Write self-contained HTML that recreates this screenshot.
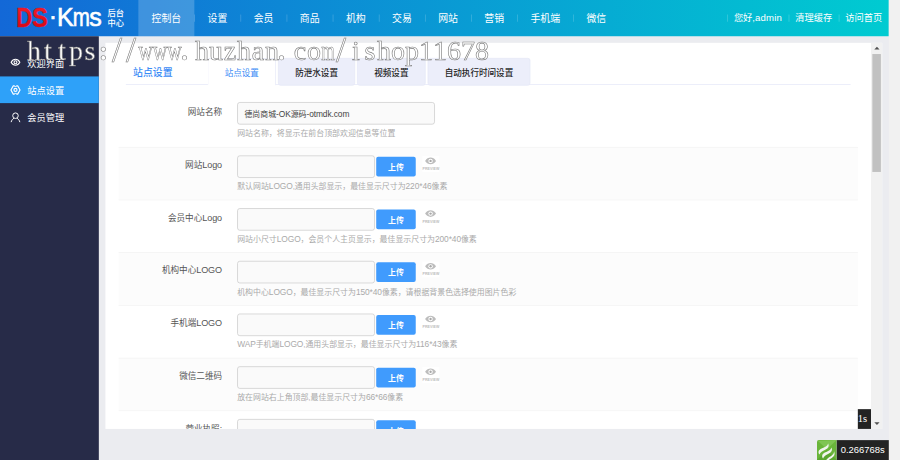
<!DOCTYPE html>
<html lang="zh-CN">
<head>
<meta charset="utf-8">
<title>DSKMS 后台中心</title>
<style>
*{box-sizing:border-box;margin:0;padding:0}
html,body{width:900px;height:460px;overflow:hidden;background:#ebecf0}
body{font-family:"Liberation Sans","Noto Sans CJK SC",sans-serif;position:relative}
#stage{position:absolute;left:0;top:0;width:1366px;height:698.2px;transform:scale(0.658858);transform-origin:0 0;background:#ebecf0;overflow:hidden;font-size:12px;color:#333}
/* outer scrollbar */
#oscroll{position:absolute;right:0;top:0;width:17px;height:699px;background:#f1f1f1}
/* header */
#hd{position:absolute;left:0;top:0;width:1349px;height:55px;background:linear-gradient(to right,#1368d7 0%,#00cbd1 100%)}
#logo{position:absolute;left:0;top:0;width:210px;height:55px}
#logo .bc{position:absolute;left:163px;top:13.200px;width:30px;font-size:12.5px;color:#fff;white-space:nowrap;font-weight:500}
#logo .bc i{display:block;font-style:normal;height:14.5px;line-height:14.5px}
#nav{position:absolute;left:210px;top:0;height:55px;display:flex}
#nav a{display:block;height:55px;line-height:55px;padding:0 20px;font-size:15px;color:#fff;position:relative;white-space:nowrap}
#nav a.on{background:rgba(255,255,255,.2)}
#nav a+a:before{content:"";position:absolute;left:0;top:22px;width:1px;height:11px;background:rgba(255,255,255,.25)}
#tools{position:absolute;right:0;top:0;height:55px;display:flex}
#tools a{display:block;height:55px;line-height:55px;padding:0 10px;font-size:14px;color:#fff;position:relative;white-space:nowrap}
#tools a:before{content:"";position:absolute;left:0;top:22px;width:1px;height:11px;background:rgba(255,255,255,.28)}
/* sidebar */
#side{position:absolute;left:0;top:55px;width:150px;height:644px;background:#272b48;padding-top:20px}
#side a{display:block;height:41px;line-height:42px;color:#fff;font-size:14px;padding-left:41.5px;position:relative;white-space:nowrap}
#side a.on{background:linear-gradient(#2ea1f9,#2ea1f9) no-repeat;background-size:100% 40.5px}
#side a svg{position:absolute;left:15px;top:12px;width:17px;height:17px}
/* iframe */
#frame{position:absolute;left:160px;top:65px;width:1179px;height:586px;background:#fff;overflow:hidden}
#iscroll{position:absolute;right:0;top:0;width:17px;height:586px;background:#f1f1f1}
#iscroll .thumb{position:absolute;left:2px;top:17px;width:13px;height:179px;background:#c1c1c1}
#iscroll .up,#iscroll .dn{position:absolute;left:5px;width:0;height:0;border-left:4px solid transparent;border-right:4px solid transparent}
#iscroll .up{top:6px;border-bottom:4px solid #505050}
#iscroll .dn{bottom:6px;border-top:4px solid #505050}
#page{position:absolute;left:0;top:0;width:1162px;height:586px;overflow:hidden}
#bar{position:absolute;left:31px;top:24px;width:1100px;height:40px;border-bottom:1px solid #e3e6f7}
#bar h3{position:absolute;left:0;top:0;width:124px;height:39px;line-height:42px;font-size:15px;font-weight:500;color:#3b8cf6;padding-left:11px}
#bar .tab{position:absolute;top:-1px;height:42px;line-height:43px;font-size:13px;text-align:center;background:#eceefa;border:1px solid #e3e6f6;color:#222;border-radius:4px;font-weight:500}
#bar .tab.on{background:#fff;color:#3b8cf6;height:42px;font-weight:normal;border-bottom-color:#fff;border-radius:4px 4px 0 0}
.row{position:absolute;left:20px;width:1122px;height:80px;border-top:1px solid #f1f1f1}
.row.g{background:#fcfcfc}
.row label{position:absolute;right:965px;top:16.5px;line-height:20px;font-size:13px;color:#555;white-space:nowrap}
.row .inp{position:absolute;left:180px;top:12px;height:34px;border:1px solid #c6c6c6;border-radius:4px;background:#fafafa;font-size:12px;line-height:36px;padding-left:10px;color:#444;overflow:hidden;white-space:nowrap}
.row .btn{position:absolute;left:391px;top:14.300px;width:60px;height:30px;line-height:32.500px;background:#409bfd;color:#fff;font-weight:bold;font-size:12px;text-align:center;border-radius:3px}
.row .eye{position:absolute;left:461px;top:13px;width:26px;height:24px;background:#fff}
.row .pv{position:absolute;left:458px;top:29px;width:32px;text-align:center;font-size:5.4px;line-height:7px;color:#bdbdbd;font-weight:bold;letter-spacing:.1px;white-space:nowrap}
.row .hint{position:absolute;left:180px;top:49px;line-height:20px;font-size:12px;color:#aaa;white-space:nowrap}
.en{font-size:106%;letter-spacing:-.15px}
#itrace{position:absolute;left:1142px;bottom:0;width:20px;height:30px;background:#232323;color:#fff;font-family:"Liberation Serif",serif;font-size:16px;line-height:30px;text-align:right;padding-right:6px;overflow:hidden;white-space:nowrap;direction:rtl}
/* outer trace */
#trace{position:absolute;right:17px;bottom:0.2px;height:30px;display:flex;align-items:flex-start}
#trace .ic{width:30px;height:30px}
#trace .tm{height:32px;line-height:30px;background:#232323;color:#fff;font-size:14.3px;padding:0 6px;width:79px;white-space:nowrap}
#wm{position:absolute;left:0;top:0;width:900px;height:460px;pointer-events:none;will-change:transform;opacity:.999}
</style>
</head>
<body>
<div id="stage">
  <div id="hd">
    <div id="logo"><svg width="210" height="55" viewBox="0 0 210 55"><defs><linearGradient id="rg" x1="0" y1="0" x2="0" y2="1"><stop offset="0" stop-color="#f4222e"/><stop offset="1" stop-color="#d4000f"/></linearGradient></defs><text font-family="Liberation Sans, sans-serif" font-weight="bold" font-size="41" fill="url(#rg)" stroke="#e2101e" stroke-width=".5" y="40.6"><tspan x="24.5" textLength="24.3" lengthAdjust="spacingAndGlyphs">D</tspan><tspan x="48.6" textLength="24" lengthAdjust="spacingAndGlyphs">S</tspan></text><text font-family="Liberation Sans, sans-serif" font-size="38" fill="#fff" stroke="#fff" stroke-width=".9" y="39.6"><tspan x="74" y="37.5">·</tspan><tspan x="86.6" y="39.6">K</tspan><tspan x="110.6" textLength="26" lengthAdjust="spacingAndGlyphs">m</tspan><tspan x="135.4">s</tspan></text></svg><span class="bc"><i>后台</i><i>中心</i></span></div>
    <div id="nav"><a class="on">控制台</a><a>设置</a><a>会员</a><a>商品</a><a>机构</a><a>交易</a><a>网站</a><a>营销</a><a>手机端</a><a>微信</a></div>
    <div id="tools"><a>您好,<span style="font-size:14.5px;letter-spacing:.35px">admin</span></a><a>清理缓存</a><a>访问首页</a></div>
  </div>
  <div id="oscroll"></div>
  <div id="side">
    <a><svg style="top:11px" viewBox="0 0 17 17" fill="none" stroke="#fff" stroke-width="1.7"><path d="M1.900 8.500C3.600 5.400 5.900 4 8.500 4S13.400 5.400 15.100 8.500C13.400 11.600 11.100 13 8.500 13S3.600 11.600 1.900 8.500Z"/><circle cx="8.5" cy="8.500" r="2.200"/></svg>欢迎界面</a>
    <a class="on"><svg style="top:11.5px" viewBox="0 0 17 17" fill="none" stroke="#fff" stroke-width="1.8"><path d="M7.300 2.200H5.200L1.600 8.500L5.200 14.800H7.300M9.700 2.200H11.800L15.400 8.500L11.800 14.800H9.700" stroke-linejoin="round"/><path d="M7.300 2.200V3.300H9.700V2.200M7.300 14.800V13.700H9.700V14.800" stroke-width="1.200"/><circle cx="8.5" cy="8.500" r="2.300"/></svg>站点设置</a>
    <a><svg style="top:12.6px" viewBox="0 0 17 17" fill="none" stroke="#fff" stroke-width="1.5"><circle cx="8.5" cy="5.600" r="4.200"/><path d="M1.900 15.400C2.600 12.300 4.400 10.400 6.300 9.400M10.700 9.400C12.600 10.400 14.400 12.300 15.100 15.400"/></svg>会员管理</a>
  </div>
  <div id="frame">
    <div id="page">
      <div id="bar">
        <h3>站点设置</h3>
        <span class="tab on" style="left:124px;width:104px">站点设置</span>
        <span class="tab" style="left:231px;width:117px">防泄水设置</span>
        <span class="tab" style="left:351px;width:104px">视频设置</span>
        <span class="tab" style="left:458px;width:156px">自动执行时间设置</span>
      </div>
      <div class="row" style="top:78px;border-top:none"><label>网站名称</label><span class="inp" style="width:300px">德尚商城<span class="en">-OK</span>源码<span class="en">-otmdk.com</span></span><span class="hint">网站名称，将显示在前台顶部欢迎信息等位置</span></div>
      <div class="row g" style="top:158px"><label>网站<span class="en">Logo</span></label><span class="inp" style="width:208.5px"></span><span class="btn">上传</span><svg class="eye" viewBox="0 0 26 24"><path d="M4.200 7.200C6.500 3.700 9.500 2.200 12.500 2.200s6 1.500 8.300 5C18.500 10.700 15.500 12.200 12.500 12.200S6.500 10.700 4.200 7.200Z" fill="#bdbdbd"/><circle cx="12.5" cy="7.200" r="3.300" fill="#fff"/><circle cx="12.5" cy="7.200" r="1.800" fill="#a8a8a8"/></svg><span class="pv">PREVIEW</span><span class="hint">默认网站<span class="en">LOGO</span>,通用头部显示，最佳显示尺寸为<span class="en">220*46</span>像素</span></div>
      <div class="row" style="top:238px"><label>会员中心<span class="en">Logo</span></label><span class="inp" style="width:208.5px"></span><span class="btn">上传</span><svg class="eye" viewBox="0 0 26 24"><path d="M4.200 7.200C6.500 3.700 9.500 2.200 12.500 2.200s6 1.500 8.300 5C18.500 10.700 15.500 12.200 12.500 12.200S6.500 10.700 4.200 7.200Z" fill="#bdbdbd"/><circle cx="12.5" cy="7.200" r="3.300" fill="#fff"/><circle cx="12.5" cy="7.200" r="1.800" fill="#a8a8a8"/></svg><span class="pv">PREVIEW</span><span class="hint">网站小尺寸<span class="en">LOGO</span>，会员个人主页显示，最佳显示尺寸为<span class="en">200*40</span>像素</span></div>
      <div class="row g" style="top:318px"><label>机构中心<span class="en">LOGO</span></label><span class="inp" style="width:208.5px"></span><span class="btn">上传</span><svg class="eye" viewBox="0 0 26 24"><path d="M4.200 7.200C6.500 3.700 9.500 2.200 12.500 2.200s6 1.500 8.300 5C18.500 10.700 15.500 12.200 12.500 12.200S6.500 10.700 4.200 7.200Z" fill="#bdbdbd"/><circle cx="12.5" cy="7.200" r="3.300" fill="#fff"/><circle cx="12.5" cy="7.200" r="1.800" fill="#a8a8a8"/></svg><span class="pv">PREVIEW</span><span class="hint">机构中心<span class="en">LOGO</span>，最佳显示尺寸为<span class="en">150*40</span>像素，请根据背景色选择使用图片色彩</span></div>
      <div class="row" style="top:398px"><label>手机端<span class="en">LOGO</span></label><span class="inp" style="width:208.5px"></span><span class="btn">上传</span><svg class="eye" viewBox="0 0 26 24"><path d="M4.200 7.200C6.500 3.700 9.500 2.200 12.500 2.200s6 1.500 8.300 5C18.500 10.700 15.500 12.200 12.500 12.200S6.500 10.700 4.200 7.200Z" fill="#bdbdbd"/><circle cx="12.5" cy="7.200" r="3.300" fill="#fff"/><circle cx="12.5" cy="7.200" r="1.800" fill="#a8a8a8"/></svg><span class="pv">PREVIEW</span><span class="hint"><span class="en">WAP</span>手机端<span class="en">LOGO</span>,通用头部显示，最佳显示尺寸为<span class="en">116*43</span>像素</span></div>
      <div class="row g" style="top:478px"><label>微信二维码</label><span class="inp" style="width:208.5px"></span><span class="btn">上传</span><svg class="eye" viewBox="0 0 26 24"><path d="M4.200 7.200C6.500 3.700 9.500 2.200 12.500 2.200s6 1.500 8.300 5C18.500 10.700 15.500 12.200 12.500 12.200S6.500 10.700 4.200 7.200Z" fill="#bdbdbd"/><circle cx="12.5" cy="7.200" r="3.300" fill="#fff"/><circle cx="12.5" cy="7.200" r="1.800" fill="#a8a8a8"/></svg><span class="pv">PREVIEW</span><span class="hint">放在网站右上角顶部,最佳显示尺寸为<span class="en">66*66</span>像素</span></div>
      <div class="row" style="top:558px"><label>营业执照:</label><span class="inp" style="width:208.5px"></span><span class="btn">上传</span></div>
      <div id="itrace">1s</div>
    </div>
    <div id="iscroll"><i class="up"></i><i class="thumb"></i><i class="dn"></i></div>
  </div>
  <div id="trace">
    <svg class="ic" viewBox="0 0 30 30"><path d="M3 0H30V30H0V3Q0 0 3 0Z" fill="#69b53a"/><path d="M1 1L15 14L30 0Z" fill="#7fc553"/><path d="M0 30L15 15L30 30Z" fill="#5aa630"/><path d="M17 5.300C18.800 9 17.500 12.300 12.500 14.800C8.500 16.800 5 18.300 3.800 22C1 18.300 2.500 14.800 7 12.800C12 10.600 16 9.500 17 5.300Z" fill="#f1f4ee"/><path d="M22 11.300C23.800 15 22.500 18.300 17.500 20.800C13.500 22.800 10.500 24.300 9.300 28C6.500 24.300 8 20.800 12 18.800C17 16.600 21 15.500 22 11.300Z" fill="#f1f4ee"/><path d="M26 17C27.800 21 26.500 24.500 22.500 27C20.500 28.300 19 29 18 30H14C15.500 27.500 18 26 21 24.300C24.500 22.300 25.800 20.500 26 17Z" fill="#f1f4ee"/></svg>
    <div class="tm">0.266768s</div>
  </div>
</div>
<svg id="wm" viewBox="0 0 900 460"><text text-anchor="middle" font-family="Liberation Serif, serif" font-size="28" fill="#fff" stroke="#7a7a7a" stroke-width="0.6"><tspan x="34 48 62 76 90" y="60">https</tspan><tspan x="103.3" y="60" font-weight="bold">:</tspan><tspan font-size="36" x="117 131" y="61.5">//</tspan><tspan x="160" y="60" textLength="43.5" lengthAdjust="spacingAndGlyphs">www</tspan><tspan x="184.5" y="60" font-weight="bold">.</tspan><tspan x="202 216 230 244 258 272" y="60">huzhan</tspan><tspan x="281.5" y="60" font-weight="bold">.</tspan><tspan x="300 314" y="60">co</tspan><tspan x="328" y="60" textLength="13.5" lengthAdjust="spacingAndGlyphs">m</tspan><tspan font-size="36" x="341" y="61.5">/</tspan><tspan x="356 370 384 398 412 426 440 454 468 482" y="60">ishop11678</tspan></text></svg>
</body>
</html>
